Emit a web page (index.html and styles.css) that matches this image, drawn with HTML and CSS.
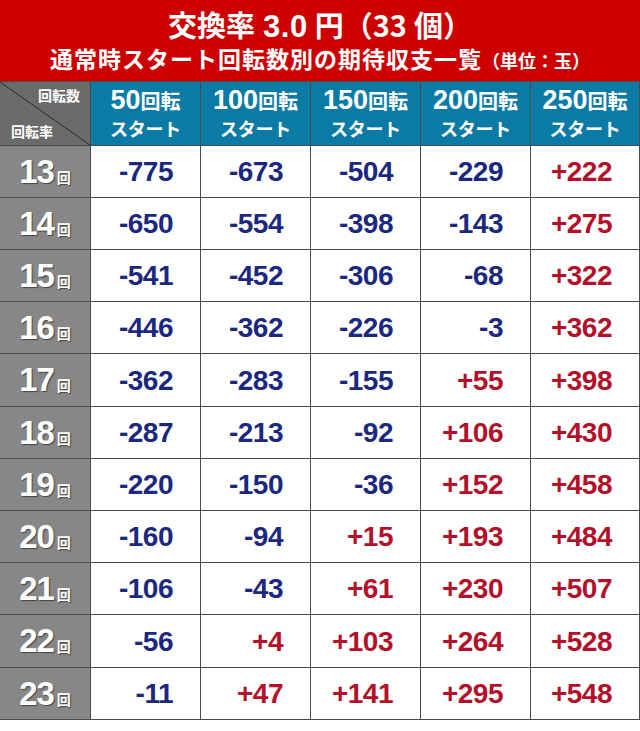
FILE: index.html
```html
<!DOCTYPE html>
<html lang="ja">
<head>
<meta charset="utf-8">
<link rel="stylesheet" href="styles.css">
</head>
<body>
<div class="page">
  <header class="banner">
    <div class="title"><span class="t-cjk">交換率</span><span class="t-num">3.0</span><span class="t-cjk">円（33</span><span class="t-cjk gap">個）</span></div>
    <div class="subtitle">通常時スタート回転数別の期待収支一覧<span class="unit">（単位：玉）</span></div>
  </header>
  <div class="table">
    <div class="corner"><span class="c-top">回転数</span><span class="c-bot">回転率</span></div>
    <div class="head"><div><span class="hn">50</span><span class="hk">回転</span></div><div class="hs">スタート</div></div>
    <div class="head"><div><span class="hn">100</span><span class="hk">回転</span></div><div class="hs">スタート</div></div>
    <div class="head"><div><span class="hn">150</span><span class="hk">回転</span></div><div class="hs">スタート</div></div>
    <div class="head"><div><span class="hn">200</span><span class="hk">回転</span></div><div class="hs">スタート</div></div>
    <div class="head"><div><span class="hn">250</span><span class="hk">回転</span></div><div class="hs">スタート</div></div>

    <div class="rh"><span class="rn">13</span><span class="rk">回</span></div>
    <div class="cell neg">-775</div><div class="cell neg">-673</div><div class="cell neg">-504</div><div class="cell neg">-229</div><div class="cell pos">+222</div>

    <div class="rh"><span class="rn">14</span><span class="rk">回</span></div>
    <div class="cell neg">-650</div><div class="cell neg">-554</div><div class="cell neg">-398</div><div class="cell neg">-143</div><div class="cell pos">+275</div>

    <div class="rh"><span class="rn">15</span><span class="rk">回</span></div>
    <div class="cell neg">-541</div><div class="cell neg">-452</div><div class="cell neg">-306</div><div class="cell neg">-68</div><div class="cell pos">+322</div>

    <div class="rh"><span class="rn">16</span><span class="rk">回</span></div>
    <div class="cell neg">-446</div><div class="cell neg">-362</div><div class="cell neg">-226</div><div class="cell neg">-3</div><div class="cell pos">+362</div>

    <div class="rh"><span class="rn">17</span><span class="rk">回</span></div>
    <div class="cell neg">-362</div><div class="cell neg">-283</div><div class="cell neg">-155</div><div class="cell pos">+55</div><div class="cell pos">+398</div>

    <div class="rh"><span class="rn">18</span><span class="rk">回</span></div>
    <div class="cell neg">-287</div><div class="cell neg">-213</div><div class="cell neg">-92</div><div class="cell pos">+106</div><div class="cell pos">+430</div>

    <div class="rh"><span class="rn">19</span><span class="rk">回</span></div>
    <div class="cell neg">-220</div><div class="cell neg">-150</div><div class="cell neg">-36</div><div class="cell pos">+152</div><div class="cell pos">+458</div>

    <div class="rh"><span class="rn">20</span><span class="rk">回</span></div>
    <div class="cell neg">-160</div><div class="cell neg">-94</div><div class="cell pos">+15</div><div class="cell pos">+193</div><div class="cell pos">+484</div>

    <div class="rh"><span class="rn">21</span><span class="rk">回</span></div>
    <div class="cell neg">-106</div><div class="cell neg">-43</div><div class="cell pos">+61</div><div class="cell pos">+230</div><div class="cell pos">+507</div>

    <div class="rh"><span class="rn">22</span><span class="rk">回</span></div>
    <div class="cell neg">-56</div><div class="cell pos">+4</div><div class="cell pos">+103</div><div class="cell pos">+264</div><div class="cell pos">+528</div>

    <div class="rh"><span class="rn">23</span><span class="rk">回</span></div>
    <div class="cell neg">-11</div><div class="cell pos">+47</div><div class="cell pos">+141</div><div class="cell pos">+295</div><div class="cell pos">+548</div>
  </div>
</div>
</body>
</html>
```

FILE: styles.css
```css
* { box-sizing: border-box; }
html, body { margin: 0; padding: 0; background: #fff; }
body {
  width: 640px;
  font-family: "Liberation Sans", "Noto Sans CJK JP", sans-serif;
  font-weight: bold;
}
.page { width: 640px; }

.banner {
  height: 81px;
  background: #cc0000;
  color: #fff;
  display: flex;
  flex-direction: column;
  align-items: center;
  padding-top: 6px;
}
.title {
  display: flex;
  align-items: baseline;
  height: 36px;
  font-size: 29px;
  line-height: 36px;
}
.title .t-cjk { font-family: "Noto Sans CJK JP", sans-serif; font-weight: 700; }
.title .t-num { font-size: 31px; margin: 0 7px 0 8px; letter-spacing: 0.5px; }
.title .gap { margin-left: 7px; }
.subtitle {
  font-family: "Noto Sans CJK JP", sans-serif;
  font-weight: 700;
  font-size: 23px;
  line-height: 32px;
  letter-spacing: 1px;
}
.subtitle .unit { font-size: 18px; letter-spacing: 0; }

.table {
  display: grid;
  grid-template-columns: 90px 109px 109px 109px 109px 108px;
  grid-template-rows: 63px repeat(4, 51px) 52px repeat(4, 51px) 52px 51px;
  gap: 1px;
  background: #4a4a4a;
  border-top: 1px solid #4a4a4a;
  border-right: 1px solid #4a4a4a;
  border-bottom: 1px solid #4a4a4a;
}

.corner {
  background: linear-gradient(to top right, #6b6b6b calc(50% - 0.7px), #1e1e1e 50%, #6b6b6b calc(50% + 0.7px));
  color: #fff;
  display: flex;
  flex-direction: column;
  justify-content: space-between;
  padding: 4px 10px 5px 11px;
  font-family: "Noto Sans CJK JP", sans-serif;
  font-size: 14px;
  line-height: 18px;
}
.corner .c-top { align-self: flex-end; }
.corner .c-bot { align-self: flex-start; }

.head {
  background: #0b7aa5;
  color: #fff;
  display: flex;
  flex-direction: column;
  align-items: center;
  justify-content: center;
  padding-bottom: 2px;
}
.head .hn { font-size: 27px; line-height: 30px; letter-spacing: 0; }
.head .hk { font-family: "Noto Sans CJK JP", sans-serif; font-size: 20px; line-height: 30px; }
.head .hs {
  font-family: "Noto Sans CJK JP", sans-serif;
  font-size: 18px;
  line-height: 25px;
  letter-spacing: -0.3px;
}

.rh {
  background: #878787;
  color: #fff;
  display: flex;
  align-items: baseline;
  justify-content: center;
  padding-top: 6px;
  text-shadow: 1px 1px 1px #444;
}
.rh .rn { font-size: 33px; line-height: 40px; letter-spacing: -1px; }
.rh .rk { font-family: "Noto Sans CJK JP", sans-serif; font-size: 14px; margin-left: 3px; }

.cell {
  background: #fff;
  display: flex;
  align-items: center;
  justify-content: flex-end;
  padding-right: 27px;
  font-size: 28px;
  letter-spacing: -0.5px;
  padding-top: 1px;
}
.neg { color: #1b2880; }
.pos { color: #b3102a; }
```
